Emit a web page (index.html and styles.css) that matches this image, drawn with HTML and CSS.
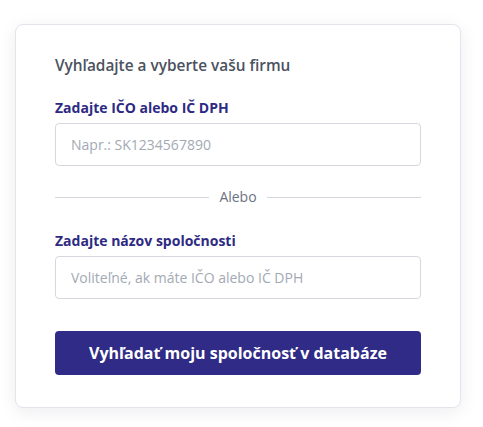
FILE: index.html
```html
<!DOCTYPE html>
<html lang="sk">
<head>
<meta charset="utf-8">
<title>Vyhľadajte firmu</title>
<link rel="stylesheet" href="styles.css">
</head>
<body>
<div class="page">
  <div class="card">
    <h2 class="title">Vyhľadajte a vyberte vašu firmu</h2>
    <label class="label" for="ico">Zadajte IČO alebo IČ DPH</label>
    <input class="input" id="ico" type="text" placeholder="Napr.: SK1234567890">
    <div class="divider"><span class="line"></span><span class="divider-text">Alebo</span><span class="line"></span></div>
    <label class="label" for="name">Zadajte názov spoločnosti</label>
    <input class="input" id="name" type="text" placeholder="Voliteľné, ak máte IČO alebo IČ DPH">
    <button class="button" type="button">Vyhľadať moju spoločnosť v databáze</button>
  </div>
</div>
</body>
</html>
```

FILE: styles.css
```css
* { box-sizing: border-box; }
html, body { margin: 0; padding: 0; background: #ffffff; }
body { font-family: "Open Sans", "Noto Sans", sans-serif; }
.page { padding: 24px 22px 20px 15px; }
.card {
  width: 446px;
  background: #ffffff;
  border: 1px solid #e3e5ea;
  border-radius: 8px;
  box-shadow: 0 4px 18px rgba(20, 30, 60, 0.08);
  padding: 29px 39px 32px;
  display: flex;
  flex-direction: column;
}
.title {
  margin: 0;
  font-size: 15.4px;
  line-height: 24px;
  font-weight: 600;
  color: #4b5260;
}
.label {
  margin-top: 20px;
  font-size: 14px;
  line-height: 20px;
  font-weight: 700;
  color: #2e2a83;
}
.input {
  margin-top: 5px;
  height: 43px;
  width: 100%;
  border: 1px solid #d5d8df;
  border-radius: 4px;
  padding: 0 15px;
  font-family: inherit;
  font-size: 14px;
  color: #374151;
  background: #ffffff;
  outline: none;
}
.input::placeholder { color: #a3a9b4; }
.divider {
  display: flex;
  align-items: center;
  gap: 10px;
  margin: 21px 0 4px;
  height: 20px;
}
.line { flex: 1; height: 1px; background: #d5d8df; }
.divider-text { font-size: 14px; line-height: 20px; color: #6b7280; }
.button {
  margin-top: 32px;
  height: 44px;
  width: 100%;
  border: none;
  border-radius: 4px;
  background: #2f2b86;
  color: #ffffff;
  font-family: inherit;
  font-size: 16px;
  font-weight: 700;
  cursor: pointer;
}
```
